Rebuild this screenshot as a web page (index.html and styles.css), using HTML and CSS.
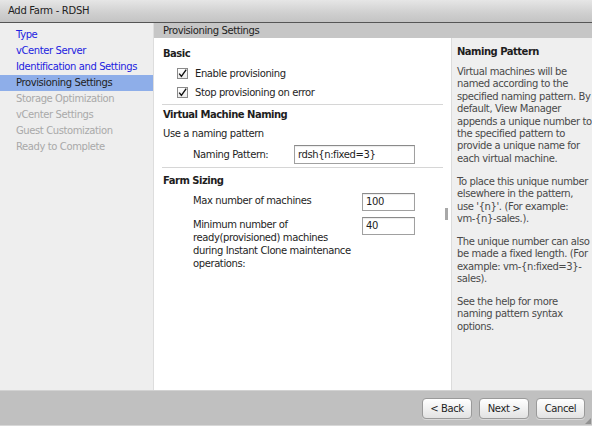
FILE: index.html
```html
<!DOCTYPE html>
<html>
<head>
<meta charset="utf-8">
<link rel="stylesheet" href="styles.css">
</head>
<body>
<div class="window">
  <div class="titlebar">Add Farm - RDSH</div>
  <div class="body">
    <nav class="steps">
      <div class="step done">Type</div>
      <div class="step done">vCenter Server</div>
      <div class="step done">Identification and Settings</div>
      <div class="step current">Provisioning Settings</div>
      <div class="step todo">Storage Optimization</div>
      <div class="step todo">vCenter Settings</div>
      <div class="step todo">Guest Customization</div>
      <div class="step todo">Ready to Complete</div>
    </nav>
    <div class="main">
      <div class="panel-header">Provisioning Settings</div>
      <div class="panel-body">
        <div class="form">
          <section class="section first">
            <div class="heading">Basic</div>
            <label class="check-row"><span class="checkbox"><svg width="11" height="11" viewBox="0 0 11 11"><path d="M2.2 5.6 L4.4 8.4 L9.2 1.6" fill="none" stroke="#111" stroke-width="1.4"/></svg></span>Enable provisioning</label>
            <label class="check-row"><span class="checkbox"><svg width="11" height="11" viewBox="0 0 11 11"><path d="M2.2 5.6 L4.4 8.4 L9.2 1.6" fill="none" stroke="#111" stroke-width="1.4"/></svg></span>Stop provisioning on error</label>
          </section>
          <section class="section">
            <div class="heading">Virtual Machine Naming</div>
            <div class="plain">Use a naming pattern</div>
            <div class="field-row">
              <div class="label">Naming Pattern:</div>
              <div class="input wide">rdsh{n:fixed=3}</div>
            </div>
          </section>
          <section class="section last">
            <div class="heading">Farm Sizing</div>
            <div class="field-row top">
              <div class="label">Max number of machines</div>
              <div class="input narrow">100</div>
            </div>
            <div class="field-row top second">
              <div class="label multi">Minimum number of<br>ready(provisioned) machines<br>during Instant Clone maintenance<br>operations:</div>
              <div class="input narrow">40</div>
            </div>
          </section>
          <div class="scroll-handle"></div>
        </div>
        <aside class="help">
          <div class="help-title">Naming Pattern</div>
          <p>Virtual machines will be<br>named according to the<br>specified naming pattern. By<br>default, View Manager<br>appends a unique number to<br>the specified pattern to<br>provide a unique name for<br>each virtual machine.</p>
          <p>To place this unique number<br>elsewhere in the pattern,<br>use '{n}'. (For example:<br>vm-{n}-sales.).</p>
          <p>The unique number can also<br>be made a fixed length. (For<br>example: vm-{n:fixed=3}-<br>sales).</p>
          <p>See the help for more<br>naming pattern syntax<br>options.</p>
        </aside>
      </div>
    </div>
  </div>
  <div class="footer">
    <button class="btn">&lt; Back</button>
    <button class="btn">Next &gt;</button>
    <button class="btn">Cancel</button>
    <span class="grip"></span>
  </div>
</div>
</body>
</html>
```

FILE: styles.css
```css
* { box-sizing: border-box; }
html, body { margin: 0; padding: 0; }
body {
  width: 592px;
  height: 426px;
  overflow: hidden;
  font-family: "DejaVu Sans", Verdana, sans-serif;
  font-size: 10px;
  letter-spacing: -0.4px;
  color: #1e1e1e;
  background: #c0c0c0;
}
.window {
  width: 592px;
  height: 426px;
  display: flex;
  flex-direction: column;
}
.titlebar {
  height: 23px;
  flex: none;
  padding-left: 8px;
  line-height: 22px;
  font-size: 10px;
  letter-spacing: -0.3px;
  color: #222;
  background: linear-gradient(#e6e6e6, #cfcfcf 60%, #c4c4c4);
  border-bottom: 1px solid #555;
}
.body {
  flex: none;
  height: 367px;
  display: flex;
}
.steps {
  width: 154px;
  flex: none;
  background: #eeeeee;
  border-right: 1px solid #dddddd;
  padding-top: 4px;
}
.step {
  height: 16px;
  line-height: 16px;
  padding-left: 16px;
  white-space: nowrap;
}
.step.done { color: #1d1de0; }
.step.current { color: #1e1e1e; background: #8eaee9; }
.step.todo { color: #a9a9a9; }
.main {
  flex: 1;
  display: flex;
  flex-direction: column;
  min-width: 0;
}
.panel-header {
  height: 15px;
  flex: none;
  line-height: 15px;
  padding-left: 9px;
  background: #c6c6c6;
  color: #222;
}
.panel-body {
  flex: 1;
  display: flex;
  background: #ffffff;
}
.form {
  width: 297px;
  flex: none;
  position: relative;
  padding: 9px 8px 0 8px;
}
.section {
  border-bottom: 1px solid #d6d6d6;
  padding: 3px 0 3px 1px;
}
.section.first { padding-top: 0; padding-bottom: 2px; }
.section.last { border-bottom: none; padding-top: 6px; }
.heading {
  font-weight: bold;
  line-height: 14px;
  height: 14px;
  letter-spacing: -0.5px;
}
.check-row {
  display: flex;
  align-items: center;
  height: 19px;
  padding-left: 14px;
}
.section.first .heading { margin-bottom: 3px; }
.checkbox {
  width: 11px;
  height: 11px;
  border: 1px solid #8a8a8a;
  background: linear-gradient(#ffffff, #ececec);
  margin-right: 7px;
  position: relative;
  flex: none;
}
.checkbox svg { position: absolute; left: -1px; top: -1px; }
.plain {
  line-height: 14px;
  margin-top: 5px;
}
.field-row {
  display: flex;
  align-items: center;
  margin-top: 4px;
  padding-left: 30px;
  height: 19px;
}
.section.last .field-row { margin-top: 5px; }
.section.last .field-row.second { margin-top: 5px; height: auto; }
.field-row.top { align-items: flex-start; }
.label { width: 101px; flex: none; white-space: nowrap; }
.field-row.top .label { width: 169px; padding-top: 1px; line-height: 13px; }
.label.multi { line-height: 12.6px; }
.input {
  height: 19px;
  border: 1px solid #a0a0a0;
  border-top-color: #8a8a8a;
  background: #fff;
  padding-left: 3px;
  line-height: 17px;
  box-shadow: inset 0 1px 1px rgba(0,0,0,0.08);
}
.input.wide { width: 121px; }
.input.narrow { width: 53px; height: 18px; line-height: 16px; }
.scroll-handle {
  position: absolute;
  left: 291px;
  top: 170px;
  width: 3px;
  height: 12px;
  background: #a8a8a8;
}
.help {
  flex: 1;
  background: #efefef;
  border-left: 1px solid #dcdcdc;
  padding: 7px 0 0 5px;
  color: #4a4a4a;
}
.help-title {
  font-weight: bold;
  color: #1e1e1e;
  line-height: 14px;
  margin-bottom: 7px;
  letter-spacing: -0.5px;
}
.help p {
  margin: 0 0 10.5px 0;
  line-height: 12.4px;
  white-space: nowrap;
}
.footer {
  flex: 1;
  background: #c0c0c0;
  border-top: 1px solid #d2d2d2;
  border-bottom: 1px solid #d8d8d8;
  display: flex;
  justify-content: flex-end;
  align-items: flex-start;
  gap: 7px;
  padding: 7px 7px 0 0;
  position: relative;
}
.btn {
  width: 50px;
  height: 21px;
  padding: 0;
  font-family: "DejaVu Sans", Verdana, sans-serif;
  font-size: 10px;
  letter-spacing: -0.4px;
  color: #1e1e1e;
  border: 1px solid #9a9a9a;
  border-radius: 4px;
  background: linear-gradient(#ffffff, #f1f1f1 50%, #e2e2e2);
  box-shadow: 0 1px 0 rgba(255,255,255,0.4);
}
.btn:last-of-type { width: 49px; }
.grip {
  position: absolute;
  right: 1px;
  bottom: 1px;
  width: 6px;
  height: 6px;
  background: radial-gradient(circle, #777 0.6px, transparent 0.9px) 0 0 / 2px 2px;
  clip-path: polygon(100% 0, 100% 100%, 0 100%);
}
```
